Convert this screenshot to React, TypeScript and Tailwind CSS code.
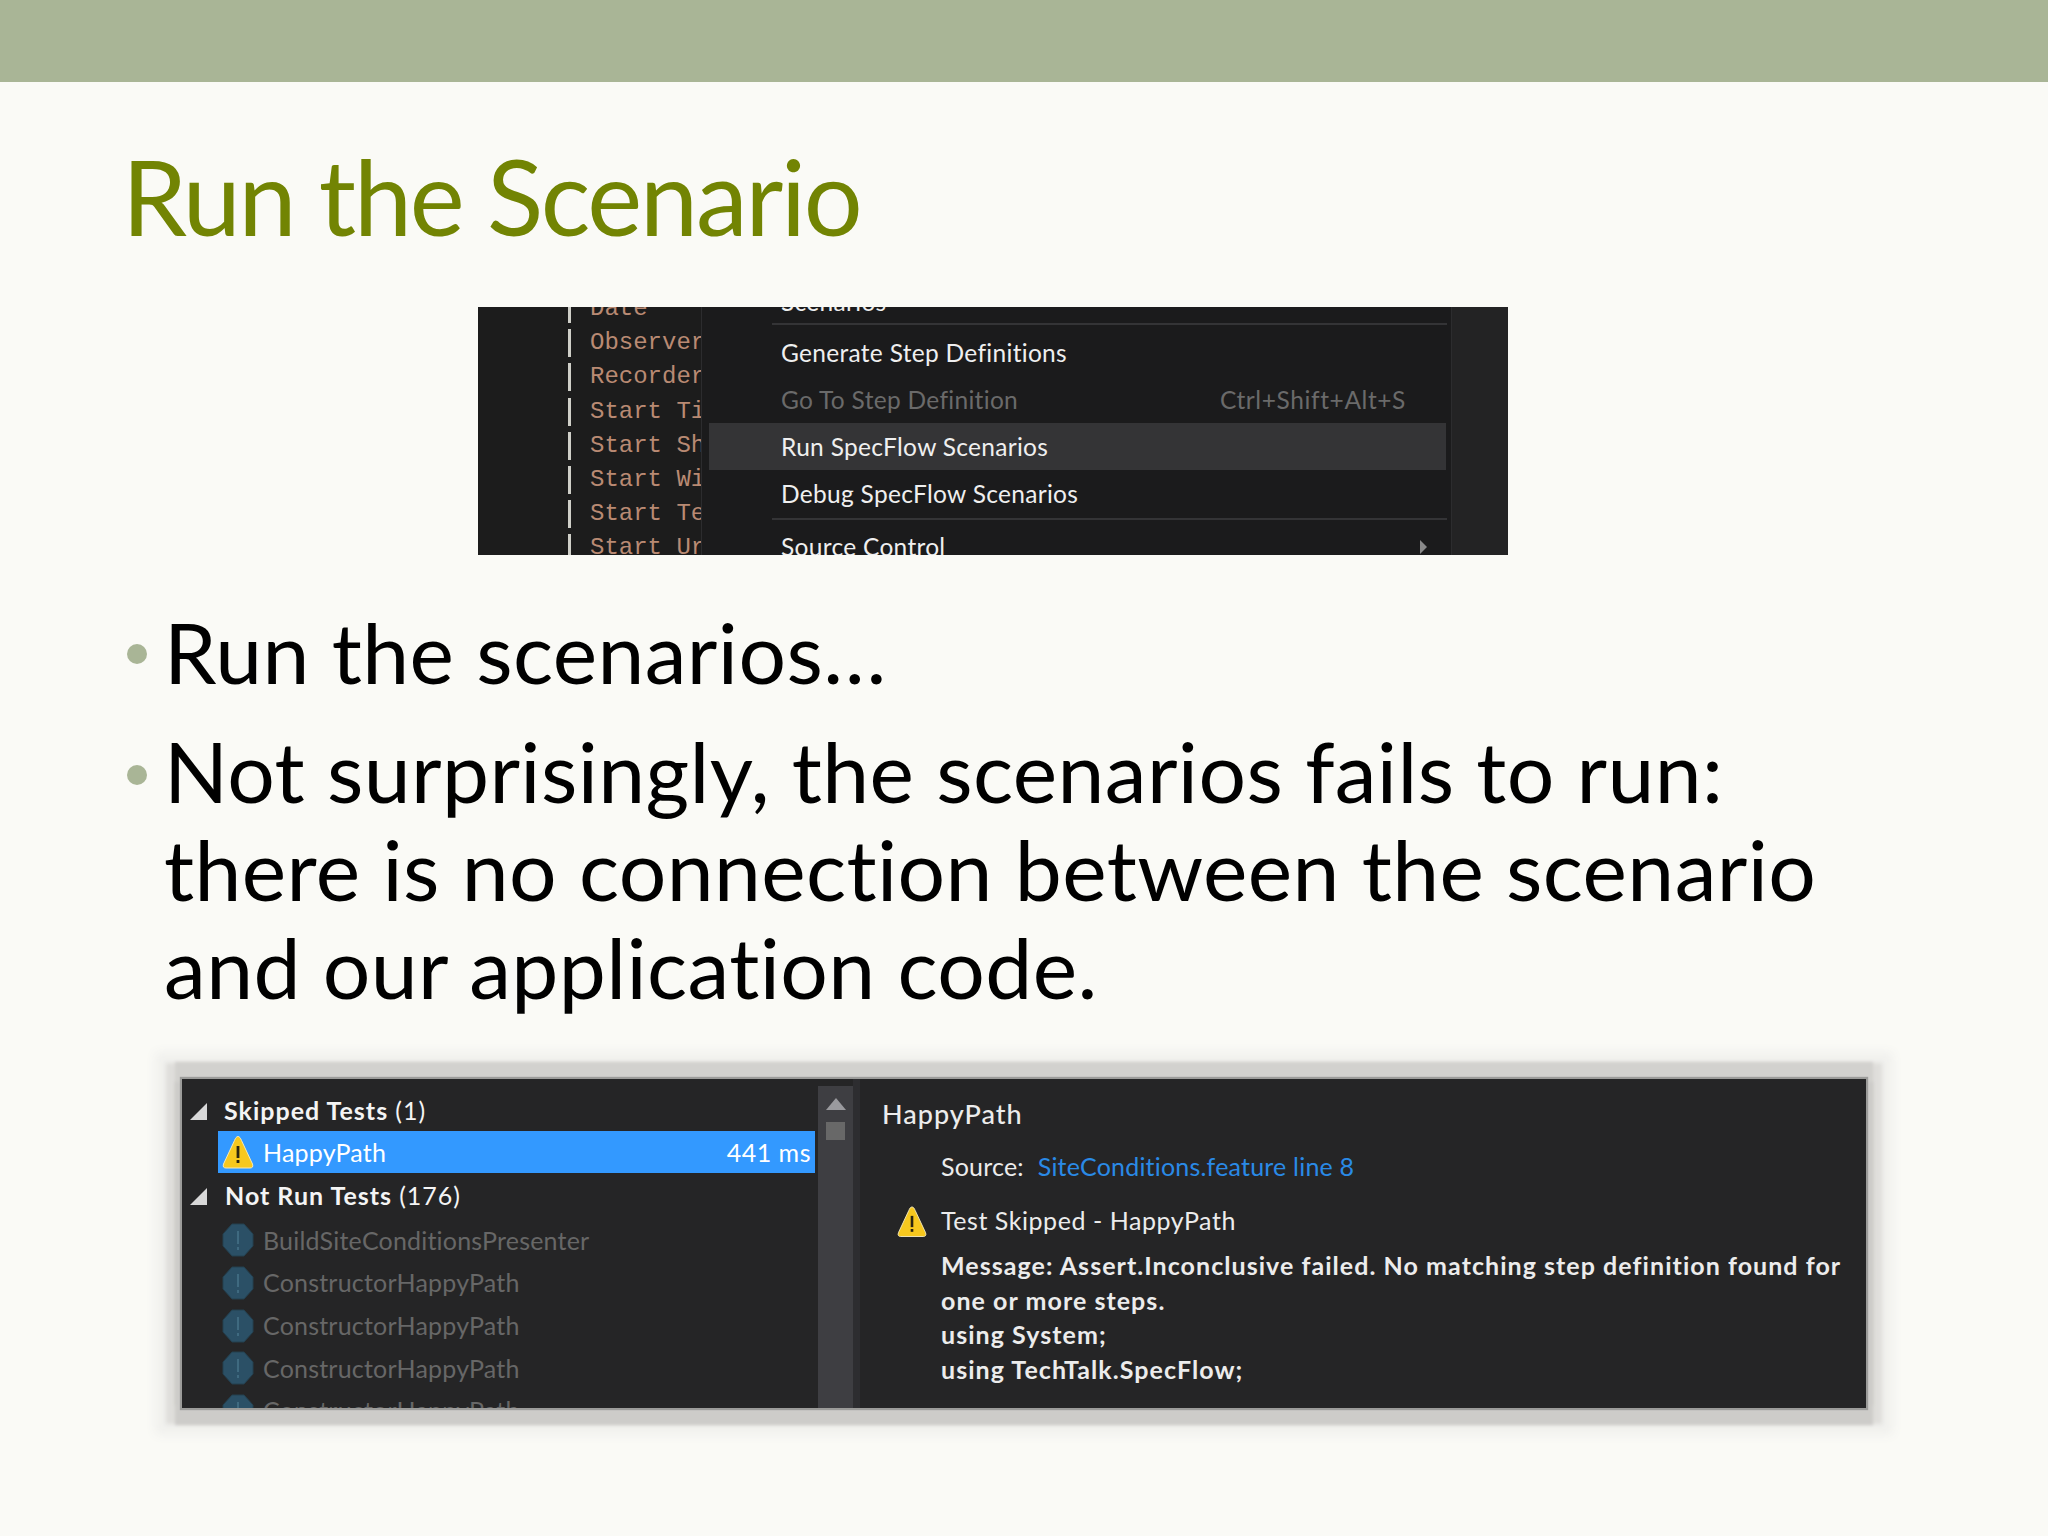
const sans = "font-['Lato','Liberation_Sans',sans-serif]";

function Warn({ className }: { className: string }) {
  return (
    <svg viewBox="0 0 32 34" className={className}>
      <path d="M16 1.5 C17.5 1.5 18.5 3 19.5 5.5 L30.5 29 C31.5 32 30 33 28 33 L4 33 C2 33 0.5 32 1.5 29 L12.5 5.5 C13.5 3 14.5 1.5 16 1.5 Z" fill="#f7c81e" stroke="#f4e9b8" strokeWidth="1" />
      <rect x="14.6" y="11" width="2.8" height="12" fill="#2a2410" />
      <rect x="14.6" y="25" width="2.8" height="3" fill="#2a2410" />
    </svg>
  );
}

function NotRun() {
  return (
    <svg viewBox="0 0 32 34" className="w-[32px] h-[34px] shrink-0">
      <path d="M10 1 H22 L31 11 V23 L22 33 H10 L1 23 V11 Z" fill="#2b5066" stroke="#24404f" strokeWidth="1" />
      <rect x="15" y="8" width="2" height="13" fill="#3f6a80" />
      <rect x="15" y="24" width="2" height="3" fill="#3f6a80" />
    </svg>
  );
}

function Tri() {
  return (
    <svg viewBox="0 0 17 17" className="w-[17px] h-[17px] shrink-0">
      <path d="M17 0 V17 H0 Z" fill="#d8d8d8" />
    </svg>
  );
}

const codeLines = ["Date", "Observer", "Recorder", "Start Ti", "Start Sh", "Start Wi", "Start Te", "Start Ur"];
const testRows = ["BuildSiteConditionsPresenter", "ConstructorHappyPath", "ConstructorHappyPath", "ConstructorHappyPath", "ConstructorHappyPath"];

function MenuItem({ children, active, dim, shortcut }: { children: string; active?: boolean; dim?: boolean; shortcut?: string }) {
  return (
    <div className={`h-[47px] mx-[7px] w-[737px] shrink-0 flex items-center justify-between pl-[72px] pr-[40px] pt-[2px] ${active ? "bg-[#343436]" : ""} ${dim ? "text-[#6a6a6a]" : "text-[#efefef]"}`}>
      <span className="whitespace-nowrap">{children}</span>
      {shortcut && <span className="whitespace-nowrap tracking-[0.6px]">{shortcut}</span>}
    </div>
  );
}

export default function App() {
  return (
    <div className={`w-[2048px] h-[1536px] bg-[#fafaf6] overflow-hidden flex flex-col ${sans}`}>
      <div className="h-[82px] shrink-0 bg-[#a9b596]" />
      <h1 className="mt-[54px] ml-[122px] h-[120px] leading-[120px] text-[104px] font-normal text-[#728403] tracking-[-2.2px] whitespace-nowrap">Run the Scenario</h1>

      <div className="mt-[51px] ml-[478px] w-[1030px] h-[248px] shrink-0 bg-[#1c1c1c] overflow-hidden flex">
        <div className="w-[90px] shrink-0" />
        <div className="w-[133px] shrink-0 overflow-hidden font-['Liberation_Mono',monospace] text-[24px] text-[#b98a73]">
          <div className="-mt-[15px] flex flex-col">
            {codeLines.map((l) => (
              <div key={l} className="h-[34.2px] shrink-0 flex items-center whitespace-nowrap">
                <span className="w-[3px] h-[28px] shrink-0 bg-[#cfcfc8]" />
                <span className="ml-[19px]">{l}</span>
              </div>
            ))}
          </div>
        </div>
        <div className="w-[751px] shrink-0 bg-[#1b1b1c] border-x border-[#2c2c2e] overflow-hidden text-[24.5px] tracking-[0.3px]">
          <div className="-mt-[17px] flex flex-col">
            <div className="h-[33px] shrink-0 pl-[79px] leading-[24px] text-[#efefef]">Scenarios</div>
            <div className="h-[2px] shrink-0 ml-[70px] w-[675px] bg-[#343436]" />
            <div className="h-[4px] shrink-0" />
            <MenuItem>Generate Step Definitions</MenuItem>
            <MenuItem dim shortcut="Ctrl+Shift+Alt+S">Go To Step Definition</MenuItem>
            <MenuItem active>Run SpecFlow Scenarios</MenuItem>
            <MenuItem>Debug SpecFlow Scenarios</MenuItem>
            <div className="h-[2px] mt-[1px] shrink-0 ml-[70px] w-[675px] bg-[#343436]" />
            <div className="flex items-center justify-between h-[54px] shrink-0 pl-[79px] pr-[24px] text-[#efefef]">
              <span>Source Control</span>
              <span className="w-0 h-0 border-y-[7px] border-y-transparent border-l-[7px] border-l-[#8a8a8a]" />
            </div>
          </div>
        </div>
        <div className="flex-1 bg-[#232324]" />
      </div>

      <ul className="mt-[48px] ml-[127px] flex flex-col gap-[21px] text-[84px] leading-[98px] text-black tracking-[0.4px]">
        <li className="flex gap-[17px]">
          <span className="mt-[41px] w-[20px] h-[20px] shrink-0 rounded-full bg-[#a9b596]" />
          <span className="whitespace-nowrap">Run the scenarios…</span>
        </li>
        <li className="flex gap-[17px]">
          <span className="mt-[43px] w-[20px] h-[20px] shrink-0 rounded-full bg-[#a9b596]" />
          <span className="whitespace-nowrap">
            Not surprisingly, the scenarios fails to run:<br />
            there is no connection between the scenario<br />
            and our application code.
          </span>
        </li>
      </ul>

      <div className="mt-[63px] ml-[182px] w-[1684px] h-[329px] shrink-0 flex bg-[#252526] overflow-hidden shadow-[0_0_1px_2px_#9c9c9a,0_10px_3px_7px_#cdccc9,0_-10px_3px_7px_#d2d1ce,0_0_4px_16px_#dfdedb,0_0_10px_27px_#f0f0ed] text-[25px] tracking-[0.2px]">
        <div className="w-[636px] shrink-0 flex flex-col pt-[16px]">
          <div className="h-[32px] shrink-0 flex items-center gap-[17px] pl-[8px] font-bold text-[#f4f4f4] tracking-[1px]">
            <Tri />
            <span className="whitespace-nowrap">Skipped Tests <span className="font-normal">(1)</span></span>
          </div>
          <div className="ml-[36px] mt-[4px] w-[597px] h-[42px] shrink-0 bg-[#3399ff] flex items-center justify-between pl-[4px] pr-[4px] text-white">
            <span className="flex items-center gap-[9px]">
              <Warn className="w-[32px] h-[34px] shrink-0" />
              <span className="pt-[2px]">HappyPath</span>
            </span>
            <span className="whitespace-nowrap tracking-[0.5px] pt-[2px]">441 ms</span>
          </div>
          <div className="h-[38px] mt-[4px] shrink-0 flex items-center gap-[18px] pl-[8px] font-bold text-[#f4f4f4] tracking-[1px]">
            <Tri />
            <span className="whitespace-nowrap">Not Run Tests <span className="font-normal">(176)</span></span>
          </div>
          <div className="mt-[4px] flex flex-col text-[#676767]">
            {testRows.map((t, i) => (
              <div key={i} className="h-[42.7px] shrink-0 flex items-center gap-[9px] pl-[40px]">
                <NotRun />
                <span className="whitespace-nowrap">{t}</span>
              </div>
            ))}
          </div>
        </div>
        <div className="w-[35px] mt-[7px] shrink-0 bg-[#3e3e42] flex flex-col items-center pt-[12px]">
          <span className="w-0 h-0 border-x-[10px] border-x-transparent border-b-[12px] border-b-[#9a9a9e]" />
          <span className="mt-[12px] w-[19px] h-[18px] bg-[#686868]" />
        </div>
        <div className="w-[7px] shrink-0 bg-[#2d2d30]" />
        <div className="flex-1 flex flex-col pl-[22px] text-[#ececec]">
          <div className="mt-[17px] h-[36px] leading-[36px] text-[27px] font-medium tracking-[1px]">HappyPath</div>
          <div className="mt-[17px] h-[34px] leading-[34px] pl-[59px] whitespace-nowrap">
            Source:<span className="ml-[14px] text-[#2a8ae6]">SiteConditions.feature line 8</span>
          </div>
          <div className="mt-[20px] h-[36px] flex items-center gap-[14px] pl-[15px] tracking-[0.55px]">
            <Warn className="w-[30px] h-[33px] shrink-0" />
            <span className="whitespace-nowrap">Test Skipped - HappyPath</span>
          </div>
          <div className="mt-[9px] pl-[59px] leading-[34.5px] font-bold text-[#ececec] tracking-[1.05px] whitespace-nowrap">
            Message: Assert.Inconclusive failed. No matching step definition found for<br />
            one or more steps.<br />
            using System;<br />
            using TechTalk.SpecFlow;
          </div>
        </div>
      </div>
    </div>
  );
}
